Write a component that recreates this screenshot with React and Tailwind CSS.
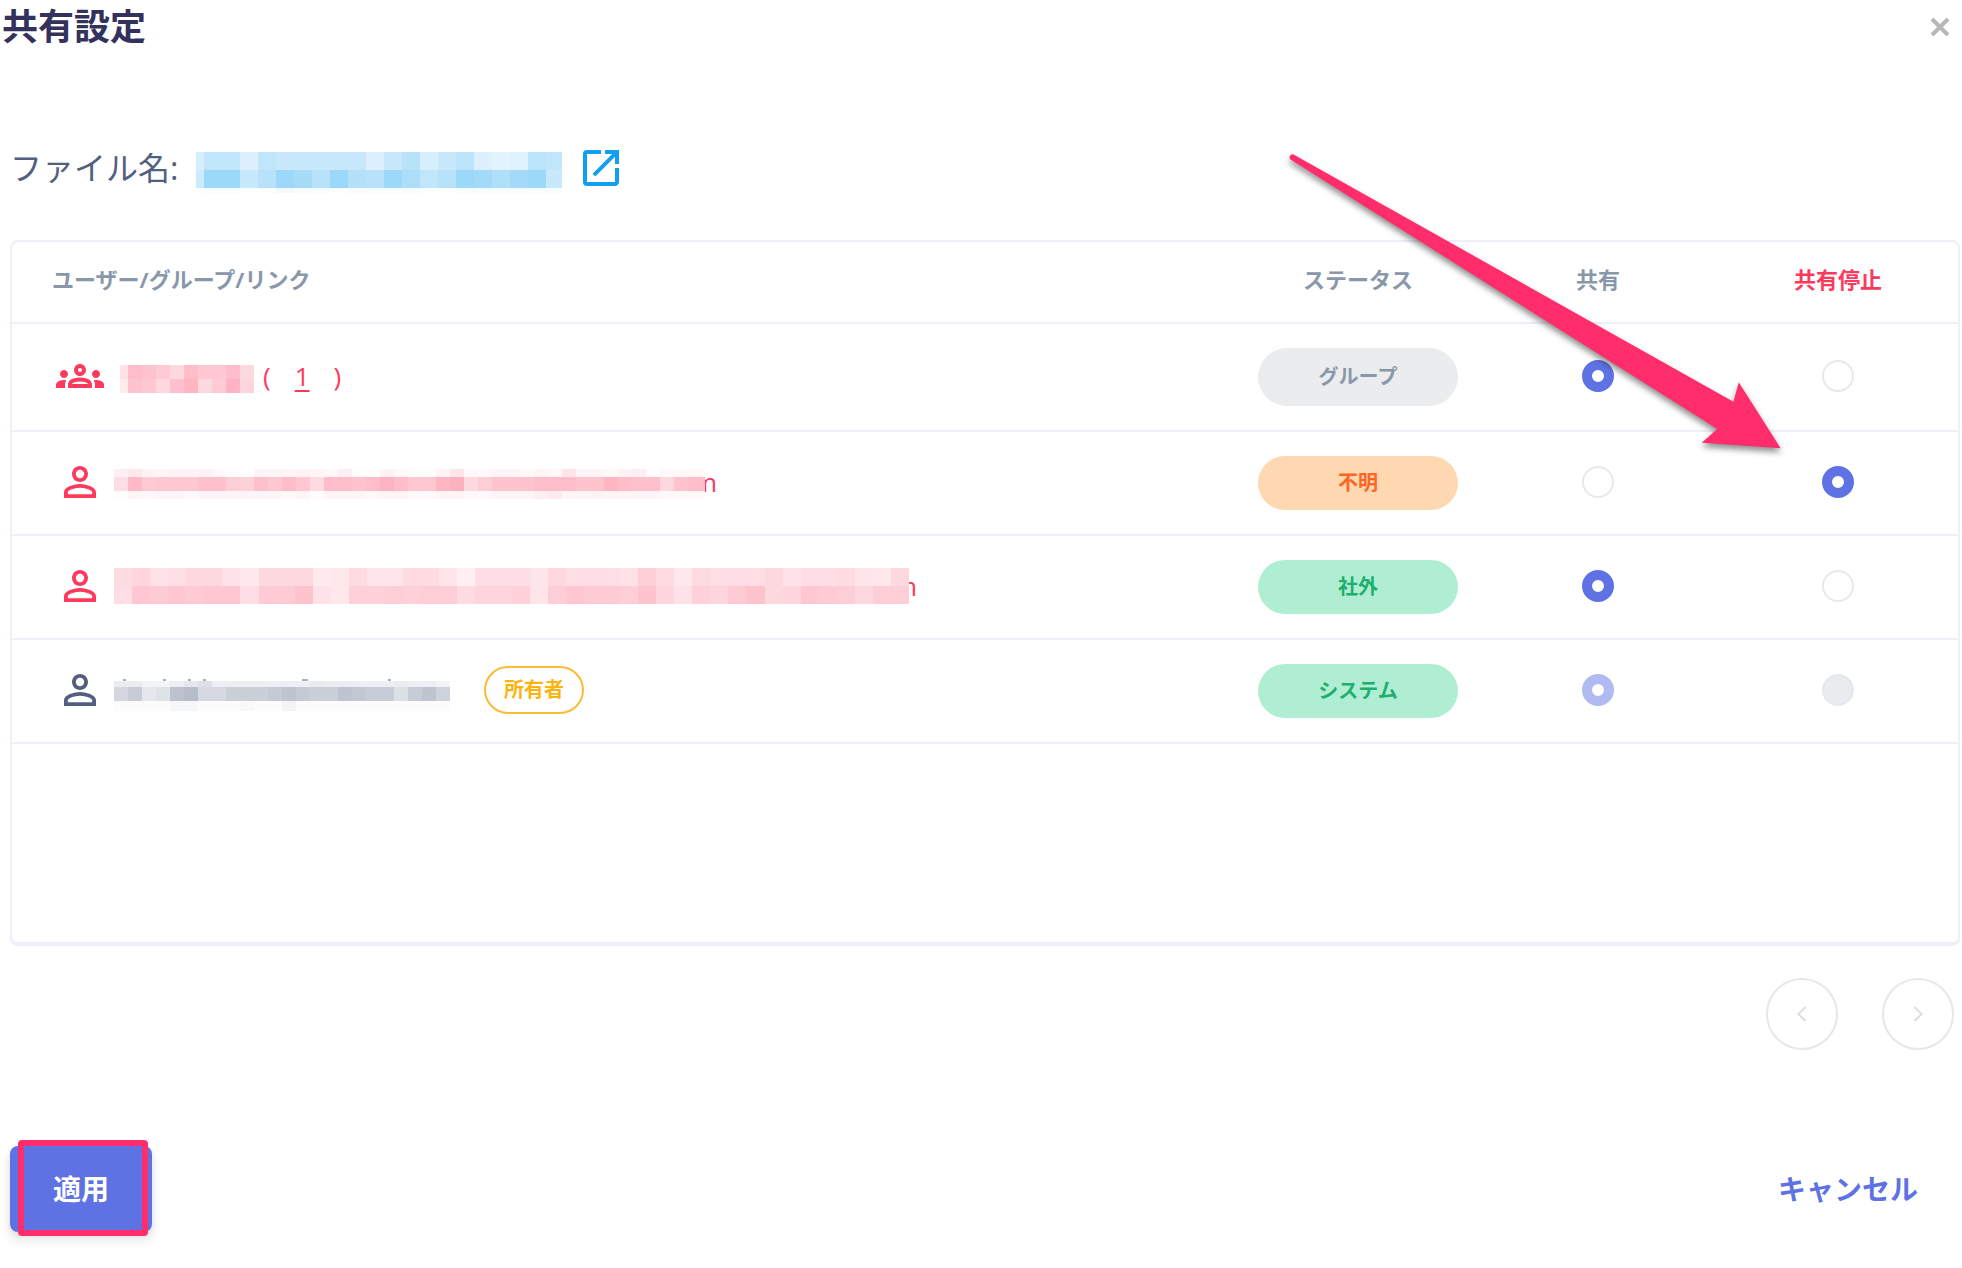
import { MdOpenInNew, MdOutlineGroups, MdPersonOutline } from "react-icons/md";

const PINK = "#fb3a5d";
const NAVY = "#525f7f";
const BLUE = "#11a0f0";

// Each strip is one line of blocks: y, height and one base-36 shade per block
const fileStrips = [
  { y: 6, h: 18, shades: "agg9geeeee9eiaeh978hg" },
  { y: 24, h: 18, shades: "dppeipmipjiplgipnknpe" },
  { y: 42, h: 5, shades: "122113221222211222222" },
];

const rows = [
  {
    id: "group",
    kind: "group",
    color: PINK,
    count: 1,
    mosaic: {
      width: 135,
      cell: 14,
      lead: 6,
      strips: [
        { y: 11, h: 14, shades: "9kigckhhkc" },
        { y: 25, h: 14, shades: "6ihcjmcgnd" },
      ],
    },
    status: "グループ",
    pill: "h-[58px] bg-[#ebecee] text-[#8898aa]",
    value: "share",
  },
  {
    id: "unknown",
    kind: "user",
    color: PINK,
    tail: "-ml-3",
    mosaic: {
      width: 591,
      cell: 14,
      lead: 0,
      strips: [
        { y: 9, h: 8, shades: "5743444210333432511421138223323283324512221" },
        { y: 17, h: 14, shades: "alghhhjjfejhkhbkkiknkhhmocfiiikkkiimkjjcikk" },
        { y: 31, h: 8, shades: "1323323333332313332332233223335633433332222" },
      ],
    },
    status: "不明",
    pill: "h-[54px] bg-[#fed8b1] text-[#ff6524]",
    value: "stop",
  },
  {
    id: "external",
    kind: "user",
    color: PINK,
    tail: "-ml-4",
    mosaic: {
      width: 795,
      cell: 18.07,
      lead: 0,
      strips: [
        { y: 4, h: 18, shades: "bd9acc97ccc67b88bb85aaa8caaa9fb7baaac9aab87c" },
        { y: 22, h: 18, shades: "ahghghhaggi97eefeffbdde8fhggfid9edgicdhgfcff" },
      ],
    },
    status: "社外",
    pill: "h-[54px] bg-[#b0eed3] text-[#1fae70]",
    value: "share",
  },
  {
    id: "system",
    kind: "user",
    color: NAVY,
    owner: true,
    mosaic: {
      width: 336,
      cell: 14,
      lead: 0,
      strips: [
        { y: 13, h: 6, shades: "774469c66666668776667664" },
        { y: 19, h: 14, shades: "fj9bnpeeiiikmkiimljjcjmh" },
        { y: 33, h: 10, shades: "111133111211411111111111" },
      ],
      // tops of the tall letters above the blocks
      specks: [9, 49, 74, 89, 188, 274],
    },
    status: "システム",
    pill: "h-[54px] bg-[#b0eed3] text-[#1fae70]",
    value: "share",
    disabled: true,
  },
];

function Mosaic({ width, cell, lead, strips, color, specks = [] }) {
  return (
    <svg
      width={width}
      height="52"
      className="relative shrink-0 bg-white"
      shapeRendering="crispEdges"
      aria-hidden="true"
    >
      <g transform="translate(0 4)">
        {strips.map((strip) =>
          strip.shades.split("").map((shade, i) => (
            <rect
              key={`${strip.y}-${i}`}
              x={i * cell - lead}
              y={strip.y}
              width={cell}
              height={strip.h}
              fill={color}
              opacity={parseInt(shade, 36) / 60}
            />
          ))
        )}
        {specks.map((x) => (
          <rect key={x} x={x} y="11" width={x === 188 ? 6 : 3} height="2" fill={color} opacity="0.5" />
        ))}
      </g>
    </svg>
  );
}

function Radio({ name, value, label, checked, disabled }) {
  return (
    <input
      type="radio"
      name={name}
      value={value}
      aria-label={label}
      defaultChecked={checked}
      disabled={disabled}
      className="block mx-auto size-8 appearance-none rounded-full border-2 border-[#e6e8ec] bg-white checked:border-10 checked:border-[#5e72e4] disabled:bg-[#e9ebee] disabled:checked:bg-white disabled:checked:border-[#b1baf2]"
    />
  );
}

function UserCell({ row }) {
  if (row.kind === "group") {
    return (
      <div className="flex items-center gap-4 text-[26px]" style={{ color: row.color }}>
        <MdOutlineGroups size={48} />
        <div className="flex items-center gap-2">
          <Mosaic {...row.mosaic} color={row.color} />
          <span className="flex gap-6">
            <span>(</span>
            <a href="#members" className="underline underline-offset-4">
              {row.count}
            </a>
            <span>)</span>
          </span>
        </div>
      </div>
    );
  }

  return (
    <div className="flex items-center gap-2.5 text-[26px]" style={{ color: row.color }}>
      <MdPersonOutline size={48} />
      <div className="flex items-center">
        <div className="z-10 flex">
          <Mosaic {...row.mosaic} color={row.color} />
        </div>
        {row.tail && <span className={row.tail}>m</span>}
      </div>
      {row.owner && (
        <span className="ml-6 flex h-12 items-center rounded-full border-2 border-[#fbbb35] px-[18px] text-[20px] font-bold text-[#fbb40e]">
          所有者
        </span>
      )}
    </div>
  );
}

function Arrow() {
  return (
    <svg
      width="510"
      height="320"
      viewBox="1280 145 510 320"
      className="pointer-events-none absolute top-[145px] right-[172px] z-20 drop-shadow-[0_4px_3px_rgba(0,0,0,0.45)]"
      aria-hidden="true"
    >
      <path
        d="M1293.5 154.5 L1733.5 401.7 L1738.7 382.3 L1780.7 448.3 L1701.8 442.7 L1717.3 429 L1290.5 159.5 A3 3 0 0 1 1293.5 154.5 Z"
        fill="#ff2d6b"
      />
    </svg>
  );
}

function App() {
  return (
    <div className="relative bg-white pb-9 font-['Open_Sans','Noto_Sans_CJK_JP',sans-serif] text-[#525f7f]">
      <header className="flex h-[54px] items-center justify-between pr-3 pl-0.5">
        <h1 className="text-[36px] leading-[54px] font-bold text-[#32325d]">共有設定</h1>
        <button type="button" aria-label="閉じる" className="p-0">
          <svg width="20" height="20" viewBox="0 0 20 20" stroke="#b7b7b7" strokeWidth="4">
            <path d="M2 2 L18 18 M18 2 L2 18" />
          </svg>
        </button>
      </header>

      <main className="mr-0.5 ml-2.5">
        <div className="mt-[90px] flex h-12 items-center">
          <span className="w-[186px] text-[32px] leading-[48px] whitespace-nowrap">ファイル名:</span>
          <a href="#file" aria-label="ファイルを開く" className="flex items-center gap-[15px] text-[#11a0f0]">
            <Mosaic width={366} cell={18} lead={10} strips={fileStrips} color={BLUE} />
            <MdOpenInNew size={48} />
          </a>
        </div>

        <div className="mt-12 h-[706px] rounded-lg border-2 border-b-4 border-[#edf0f7]">
          <table className="w-full table-fixed border-separate border-spacing-0">
            <thead>
              <tr className="h-[82px] text-[22px] text-[#8898aa] *:border-b-2 *:border-[#edf0f7] *:p-0 *:pb-1.5">
                <th scope="col" className="text-left">
                  <span className="pl-10">ユーザー/グループ/リンク</span>
                </th>
                <th scope="col" className="w-60">ステータス</th>
                <th scope="col" className="w-60">共有</th>
                <th scope="col" className="w-60 text-[#fb3a5d]">共有停止</th>
              </tr>
            </thead>
            <tbody>
              {rows.map((row) => (
                <tr
                  key={row.id}
                  className="h-26 first:h-27 *:border-b-2 *:border-[#edf0f7] *:p-0"
                >
                  <td>
                    <div className="pb-0.5 pl-11">
                      <UserCell row={row} />
                    </div>
                  </td>
                  <td>
                    <span
                      className={`mx-auto flex w-50 items-center justify-center rounded-full text-[20px] font-bold ${row.pill}`}
                    >
                      {row.status}
                    </span>
                  </td>
                  <td>
                    <div className="pb-0.5">
                      <Radio
                        name={row.id}
                        value="share"
                        label="共有"
                        checked={row.value === "share"}
                        disabled={row.disabled}
                      />
                    </div>
                  </td>
                  <td>
                    <div className="pb-0.5">
                      <Radio
                        name={row.id}
                        value="stop"
                        label="共有停止"
                        checked={row.value === "stop"}
                        disabled={row.disabled}
                      />
                    </div>
                  </td>
                </tr>
              ))}
            </tbody>
          </table>
        </div>

        <nav className="mt-8 mr-1.5 flex justify-end gap-11">
          <button
            type="button"
            aria-label="前へ"
            className="flex size-18 items-center justify-center rounded-full border-2 border-[#e6e7eb]"
          >
            <svg width="10" height="16" viewBox="0 0 10 16" fill="none" stroke="#dcdde2" strokeWidth="2">
              <path d="M8.5 1 L1.5 8 L8.5 15" />
            </svg>
          </button>
          <button
            type="button"
            aria-label="次へ"
            className="flex size-18 items-center justify-center rounded-full border-2 border-[#e6e7eb]"
          >
            <svg width="10" height="16" viewBox="0 0 10 16" fill="none" stroke="#dcdde2" strokeWidth="2">
              <path d="M1.5 1 L8.5 8 L1.5 15" />
            </svg>
          </button>
        </nav>

        <div className="mt-24 flex items-center justify-between">
          <div className="relative">
            <button
              type="button"
              className="block h-[86px] w-[142px] rounded-lg bg-[#5e72e4] text-[28px] font-bold text-white shadow-[0_8px_12px_rgba(50,50,93,0.11),0_2px_6px_rgba(0,0,0,0.08)]"
            >
              適用
            </button>
            <div className="pointer-events-none absolute -top-1.5 right-1 -bottom-1 left-2 rounded-sm border-6 border-[#ff2d6b]" />
          </div>
          <button type="button" className="px-[42px] text-[28px] font-bold text-[#5e72e4]">
            キャンセル
          </button>
        </div>
      </main>

      <Arrow />
    </div>
  );
}

export default App;
